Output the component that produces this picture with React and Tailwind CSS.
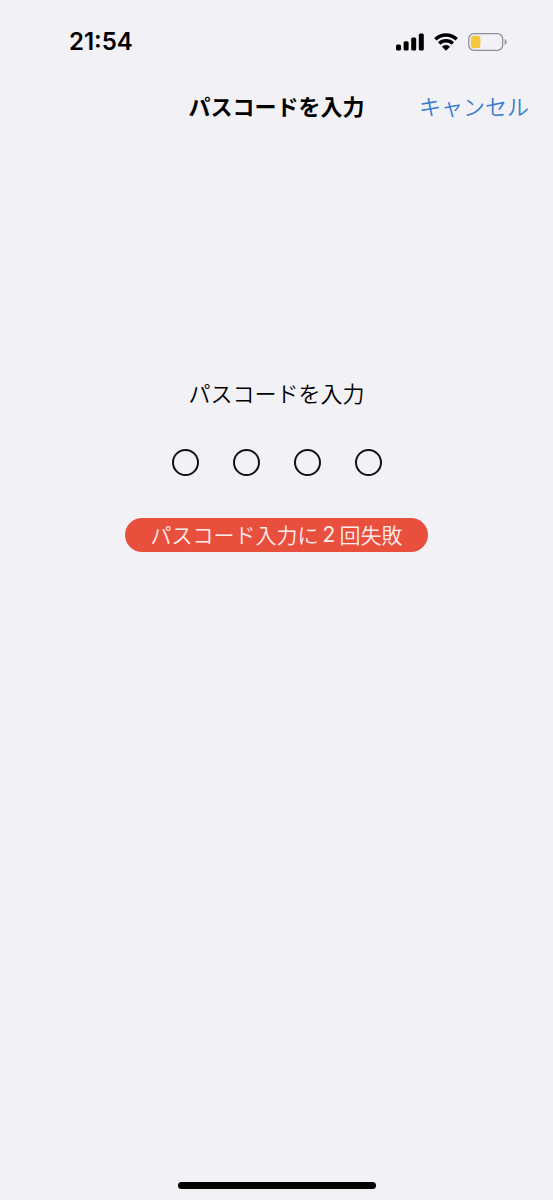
import { useRef, useState } from "react";

const PASSCODE_LENGTH = 4;

function SignalIcon() {
  return (
    <svg viewBox="0 0 28 18" className="w-7 h-[18px]" fill="currentColor" aria-hidden="true">
      <rect x="0" y="11.5" width="5" height="6" rx="1.5" />
      <rect x="7.6" y="8.2" width="5" height="9.3" rx="1.5" />
      <rect x="15.2" y="4.4" width="5" height="13.1" rx="1.5" />
      <rect x="22.8" y="0.5" width="5" height="17" rx="1.5" />
    </svg>
  );
}

function WifiIcon() {
  return (
    <svg viewBox="0 0 24 18" className="w-6 h-[18px]" aria-hidden="true">
      <g fill="none" stroke="currentColor" strokeWidth="3.5">
        <path d="M1.3 6.3a15.3 15.3 0 0 1 21.4 0" />
        <path d="M5.2 10.6a9.8 9.8 0 0 1 13.6 0" />
      </g>
      <path
        d="M12 17.4 8.3 13.7a5.3 5.3 0 0 1 7.4 0Z"
        fill="currentColor"
        stroke="currentColor"
        strokeWidth="0.6"
        strokeLinejoin="round"
      />
    </svg>
  );
}

function BatteryIcon() {
  return (
    <svg viewBox="0 0 40 18" className="w-10 h-[18px]" aria-hidden="true">
      <rect x="0.7" y="0.7" width="34" height="16.6" rx="5.2" fill="none" stroke="#8f8f95" strokeWidth="1.3" />
      <rect x="2.8" y="2.8" width="9.6" height="12.4" rx="3.2" fill="#f3c83c" />
      <path d="M36.7 6v6c1.2-.5 1.9-1.6 1.9-3s-.7-2.5-1.9-3Z" fill="#8f8f95" />
    </svg>
  );
}

function StatusBar() {
  return (
    <div className="flex items-center justify-between h-[83px] pl-[69px] pr-[45px]">
      <time className="font-['Inter'] text-2xl font-semibold">21:54</time>
      <div className="flex items-center gap-2.5">
        <SignalIcon />
        <WifiIcon />
        <BatteryIcon />
      </div>
    </div>
  );
}

function NavBar({ title, onCancel }) {
  return (
    <header className="grid grid-cols-[1fr_auto_1fr] items-center h-[45px] px-6">
      <h1 className="col-start-2 text-[22px] font-semibold">{title}</h1>
      <button
        type="button"
        onClick={onCancel}
        className="justify-self-end text-[22px] font-[350] text-[#3b7dd0]"
      >
        キャンセル
      </button>
    </header>
  );
}

export default function App() {
  const [digits, setDigits] = useState(Array(PASSCODE_LENGTH).fill(""));
  const inputs = useRef([]);

  const handleChange = (idx, value) => {
    setDigits((prev) => prev.map((d, i) => (i === idx ? value : d)));
    if (value) {
      inputs.current[idx + 1]?.focus();
    }
  };

  const reset = () => setDigits(Array(PASSCODE_LENGTH).fill(""));

  return (
    <div className="flex flex-col min-h-screen bg-[#f1f1f6] text-black font-['Noto_Sans_CJK_JP',sans-serif]">
      <StatusBar />
      <NavBar title="パスコードを入力" onCancel={reset} />

      <main className="flex flex-col flex-1 items-center pt-[248px]">
        <p id="passcode-label" className="text-[22px] leading-8 font-[350]">
          パスコードを入力
        </p>

        <div role="group" aria-labelledby="passcode-label" className="flex gap-[34px] mt-[41px]">
          {digits.map((digit, idx) => (
            <input
              key={idx}
              ref={(el) => {
                inputs.current[idx] = el;
              }}
              type="password"
              inputMode="numeric"
              maxLength={1}
              value={digit}
              onChange={(e) => handleChange(idx, e.target.value)}
              aria-label={`${idx + 1}桁目`}
              className="size-[27px] rounded-full border-2 border-[#111114] bg-transparent text-center text-transparent outline-none"
            />
          ))}
        </div>

        <p
          role="alert"
          className="flex items-center justify-center gap-1 mt-[42px] h-[34px] px-[26px] rounded-full bg-[#e94f3d] text-[21px] font-[350] text-[#fdeeec]"
        >
          <span>パスコード入力に</span>
          <span className="font-['Inter'] font-normal">2</span>
          <span>回失敗</span>
        </p>
      </main>

      <div className="self-center w-[198px] h-[7px] mb-[11px] rounded-full bg-black" />
    </div>
  );
}
